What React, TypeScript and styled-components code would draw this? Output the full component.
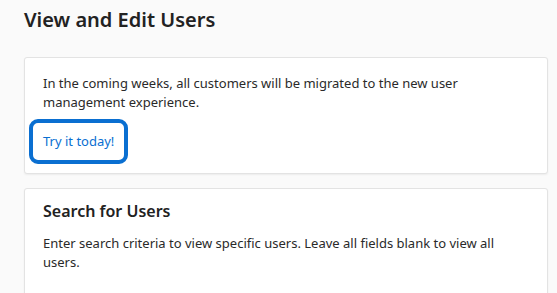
import styled, { createGlobalStyle } from "styled-components";

const GlobalStyle = createGlobalStyle`
  html, body {
    margin: 0;
    padding: 0;
    background: #fafafa;
    font-family: "Noto Sans", "Open Sans", sans-serif;
    color: #1f1f1f;
  }
`;

const Page = styled.main`
  padding: 6px 9px 0 24px;
  display: flex;
  flex-direction: column;
  gap: 14px;
`;

const Title = styled.h1`
  margin: 0 0 9px;
  font-size: 20px;
  line-height: 28px;
  font-weight: 600;
  color: #222;
`;

const Card = styled.section<{ $top: number; $bottom: number }>`
  background: #fff;
  border: 1px solid #e3e3e3;
  border-radius: 3px;
  box-shadow: 0 1px 2px rgba(0, 0, 0, 0.06);
  padding: ${(p) => p.$top}px 17px ${(p) => p.$bottom}px 18px;
  display: flex;
  flex-direction: column;
  align-items: flex-start;
`;

const Text = styled.p`
  margin: 0;
  font-size: 13px;
  line-height: 19px;
  color: #2a2a2a;
`;

const CardTitle = styled.h2`
  margin: 0 0 12px;
  font-size: 16px;
  line-height: 22px;
  font-weight: 600;
  color: #222;
`;

const TryButton = styled.button`
  margin: 7.5px 0 0 -14px;
  padding: 8.8px 10px;
  background: #fff;
  border: 4px solid #0a6fd1;
  border-radius: 9px;
  font-family: inherit;
  font-size: 13px;
  line-height: 19px;
  color: #0a6fd1;
  cursor: pointer;
`;

export default function App() {
  return (
    <>
      <GlobalStyle />
      <Page>
        <Title>View and Edit Users</Title>
        <Card $top={15.5} $bottom={9.3}>
          <Text>
            In the coming weeks, all customers will be migrated to the new user
            management experience.
          </Text>
          <TryButton>Try it today!</TryButton>
        </Card>
        <Card $top={11} $bottom={30}>
          <CardTitle>Search for Users</CardTitle>
          <Text>
            Enter search criteria to view specific users. Leave all fields blank
            to view all users.
          </Text>
        </Card>
      </Page>
    </>
  );
}
